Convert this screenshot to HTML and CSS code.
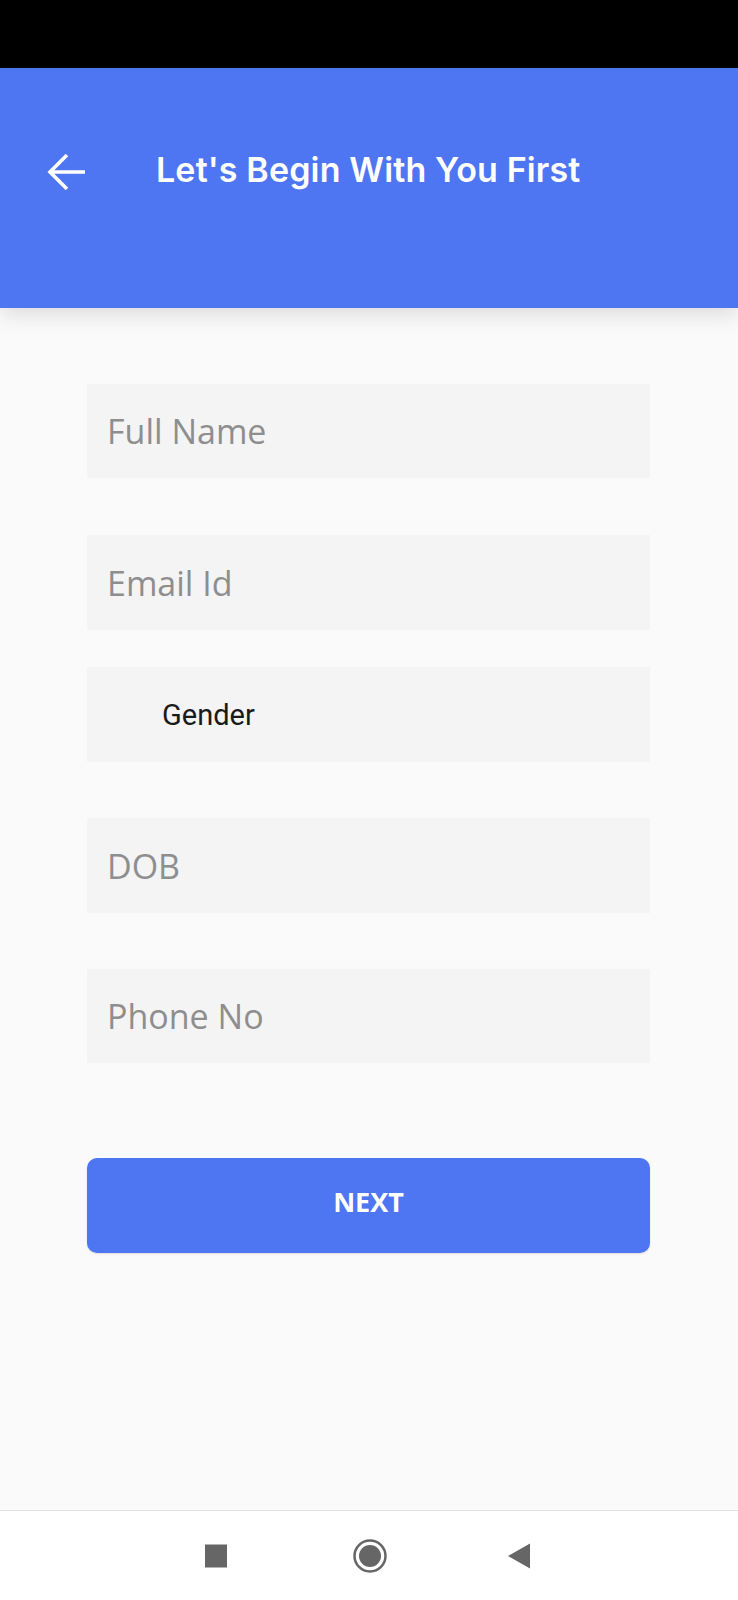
FILE: index.html
```html
<!DOCTYPE html>
<html>
<head>
<meta charset="utf-8">
<link rel="stylesheet" href="styles.css">
</head>
<body>
<div class="screen">
  <div class="status-bar"></div>
  <header class="app-header">
    <div class="header-row">
      <svg class="back-icon" width="40" height="40" viewBox="0 0 40 40">
        <path d="M4 20H39M21 3L4 20L21 37" fill="none" stroke="#ffffff" stroke-width="3.6" stroke-linejoin="miter"/>
      </svg>
      <h1 class="title">Let's Begin With You First</h1>
    </div>
  </header>
  <main class="form">
    <div class="field field-name"><span class="placeholder">Full Name</span></div>
    <div class="field field-email"><span class="placeholder">Email Id</span></div>
    <div class="field field-gender"><span class="select-label">Gender</span></div>
    <div class="field field-dob"><span class="placeholder">DOB</span></div>
    <div class="field field-phone"><span class="placeholder">Phone No</span></div>
    <button class="next-btn">NEXT</button>
  </main>
  <nav class="nav-bar">
    <svg class="nav-icon nav-recent" width="24" height="24" viewBox="0 0 24 24"><rect x="1" y="0.5" width="22" height="23" fill="#666"/></svg>
    <svg class="nav-icon nav-home" width="36" height="36" viewBox="0 0 36 36"><circle cx="18" cy="18" r="15.5" fill="none" stroke="#666" stroke-width="2.5"/><circle cx="18" cy="18" r="11" fill="#666"/></svg>
    <svg class="nav-icon nav-back" width="24" height="26" viewBox="0 0 24 26"><path d="M23 0.5V25.5L1 13Z" fill="#666"/></svg>
  </nav>
</div>
</body>
</html>
```
FILE: styles.css
```css
* { box-sizing: border-box; }
html, body { margin: 0; padding: 0; }
body { background: #fafafa; width: 738px; height: 1600px; overflow: hidden; }
.screen { display: flex; flex-direction: column; height: 1600px; }
.status-bar { height: 68px; background: #000; flex: none; }
.app-header {
  height: 240px;
  flex: none;
  background: #4e75f2;
  padding: 76px 0 0 46px;
  box-shadow: 0 6px 22px rgba(0,0,0,0.13);
  position: relative;
  z-index: 1;
}
.header-row { display: flex; align-items: center; height: 56px; }
.back-icon { flex: none; display: block; }
.title {
  margin: 0 0 0 70px;
  color: #fff;
  font-family: Inter, "Open Sans", sans-serif;
  font-weight: 600;
  font-size: 34px;
  letter-spacing: 0.15px;
  line-height: 1;
  padding-bottom: 4px;
}
.form {
  flex: 1;
  display: flex;
  flex-direction: column;
  padding: 76px 88px 0 87px;
}
.field {
  background: #f4f4f4;
  height: 95px;
  display: flex;
  align-items: center;
  padding-left: 20px;
}
.field-name { height: 94px; }
.field-email { margin-top: 57px; }
.field-gender { margin-top: 37px; padding-left: 75px; }
.field-dob { margin-top: 56px; }
.field-phone { margin-top: 56px; height: 94px; }
.placeholder {
  font-family: "Open Sans", sans-serif;
  font-size: 34px;
  color: #8e8e8e;
  font-weight: 400;
}
.select-label {
  font-family: Roboto, sans-serif;
  font-size: 29px;
  color: #1a1a1a;
}
.next-btn {
  margin-top: 95px;
  height: 95px;
  border: none;
  border-radius: 10px;
  background: #4e75f2;
  color: #fff;
  font-family: "Open Sans", sans-serif;
  font-weight: 700;
  font-size: 27px;
  padding: 0 0 8px 0;
  box-shadow: 0 1px 2px rgba(0,0,0,0.12);
}
.nav-bar {
  flex: none;
  height: 90px;
  background: #fff;
  border-top: 1.5px solid #e2e2e2;
  display: flex;
  align-items: center;
  justify-content: flex-start;
  padding-left: 204px;
}
.nav-icon { display: block; }
.nav-recent { margin-right: 124px; }
.nav-home { margin-right: 119px; }
```
